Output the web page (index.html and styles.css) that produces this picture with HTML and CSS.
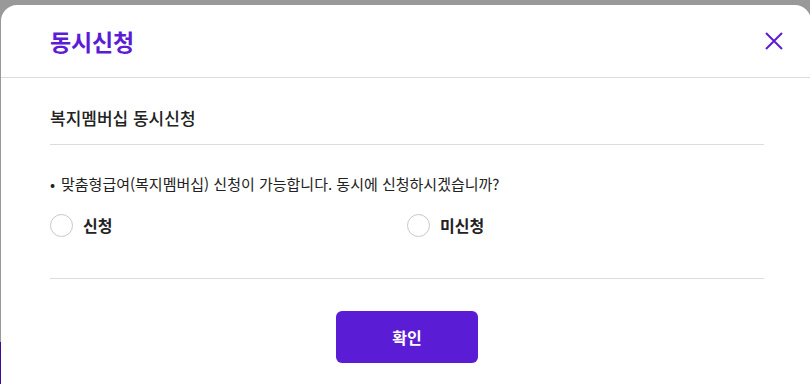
FILE: index.html
```html
<!DOCTYPE html>
<html lang="ko">
<head>
<meta charset="utf-8">
<title>동시신청</title>
<link rel="stylesheet" href="styles.css">
</head>
<body>
<div class="modal">
  <header class="modal-header">
    <h1 class="modal-title">동시신청</h1>
    <button class="close-btn" type="button" aria-label="닫기">
      <svg width="18" height="18" viewBox="0 0 18 18"><path d="M1 1 L17 17 M17 1 L1 17" stroke="#5b1cd6" stroke-width="2" fill="none"/></svg>
    </button>
  </header>
  <div class="modal-body">
    <h2 class="section-title">복지멤버십 동시신청</h2>
    <p class="notice"><span class="bullet">•</span>맞춤형급여(복지멤버십) 신청이 가능합니다. 동시에 신청하시겠습니까?</p>
    <div class="radio-group">
      <label class="radio"><span class="radio-circle"></span><span class="radio-label">신청</span></label>
      <label class="radio"><span class="radio-circle"></span><span class="radio-label">미신청</span></label>
    </div>
    <div class="modal-footer">
      <button class="confirm-btn" type="button">확인</button>
    </div>
  </div>
</div>
</body>
</html>
```

FILE: styles.css
```css
html, body {
  margin: 0;
  padding: 0;
  height: 384px;
  overflow: hidden;
}
body {
  background: linear-gradient(to bottom, #999999 0, #999999 342px, #3f0c98 342px);
  font-family: "Noto Sans CJK KR", "Noto Sans", sans-serif;
  color: #222;
  padding-top: 5px;
  padding-left: 1px;
  box-sizing: border-box;
}
.modal {
  width: 810px;
  height: 379px;
  background: #fff;
  border-radius: 16px 16px 0 0;
}
.modal-header {
  height: 72px;
  border-bottom: 1px solid #dcdcdc;
  display: flex;
  align-items: center;
  justify-content: space-between;
  padding: 0 28px 0 49px;
}
.modal-title {
  margin: 0;
  font-size: 23px;
  font-weight: 700;
  color: #5b1cd6;
  line-height: 30px;
  letter-spacing: -0.2px;
}
.close-btn {
  border: 0;
  background: none;
  padding: 0;
  width: 18px;
  height: 18px;
  display: flex;
}
.modal-body {
  padding: 0 47px 0 49px;
}
.section-title {
  margin: 0;
  padding: 27px 0 14px;
  font-size: 17px;
  line-height: 25px;
  font-weight: 500;
  color: #222;
  border-bottom: 1px solid #dcdcdc;
}
.notice {
  margin: 28px 0 0;
  font-size: 15px;
  line-height: 21px;
  display: flex;
  align-items: center;
}
.bullet {
  width: 11px;
  flex: none;
}
.radio-group {
  display: grid;
  grid-template-columns: 1fr 1fr;
  margin-top: 20px;
  padding-bottom: 41px;
  border-bottom: 1px solid #dcdcdc;
}
.radio {
  display: flex;
  align-items: center;
  gap: 10px;
}
.radio-circle {
  width: 21px;
  height: 21px;
  border: 1px solid #c8c8c8;
  border-radius: 50%;
  background: #fff;
}
.radio-label {
  font-size: 16px;
  font-weight: 700;
  line-height: 23px;
}
.modal-footer {
  display: flex;
  justify-content: center;
  padding-top: 32px;
}
.confirm-btn {
  width: 142px;
  height: 52px;
  border: 0;
  border-radius: 6px;
  background: #5b1cd6;
  color: #fff;
  font-family: inherit;
  font-size: 16px;
  font-weight: 700;
}
```
